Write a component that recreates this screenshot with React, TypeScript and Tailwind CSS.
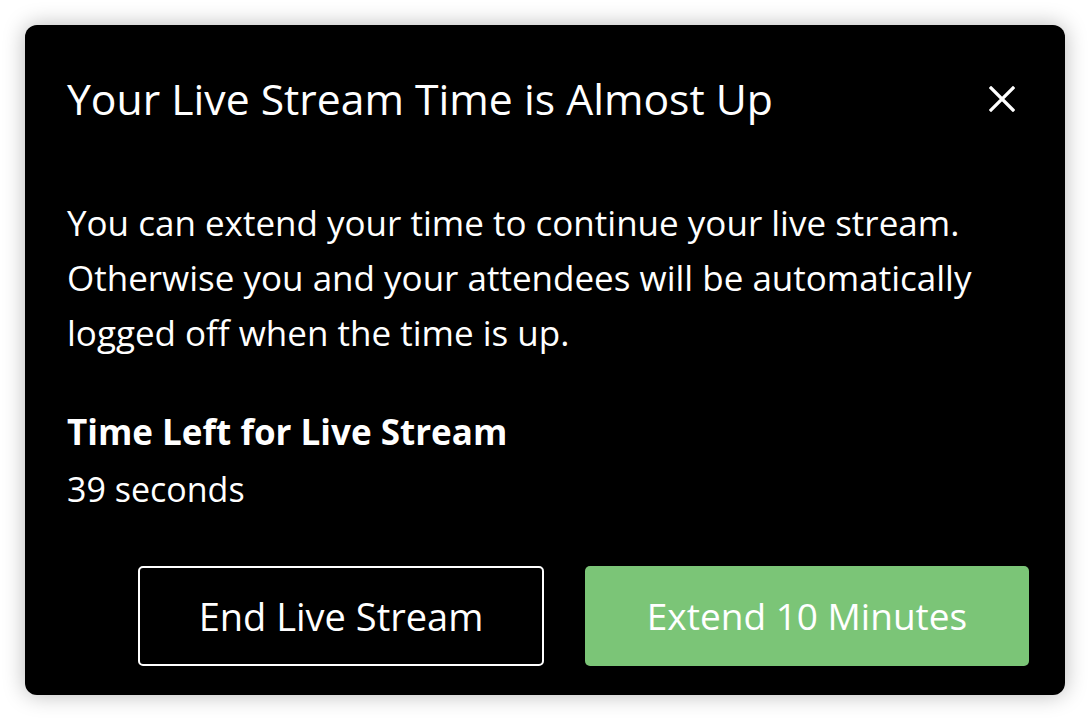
export default function App() {
  return (
    <div className="min-h-[720px] w-[1090px] bg-white pt-[25px] pl-[25px]" style={{ fontFamily: "'Open Sans', Lato, sans-serif" }}>
      <div className="flex h-[670px] w-[1040px] flex-col rounded-[12px] bg-black pl-[42px] pr-[36px] pt-[50px] text-white shadow-[0_0_22px_rgba(0,0,0,0.28)]">
        <div className="flex items-center justify-between">
          <h2 className="text-[42.7px] leading-[48px] font-medium">Your Live Stream Time is Almost Up</h2>
          <button className="mr-[13px] flex h-[48px] w-[28px] items-center justify-center">
            <svg width="26" height="26" viewBox="0 0 26 26" fill="none" stroke="white" strokeWidth="3.2" strokeLinecap="square">
              <path d="M2 2 L24 24 M24 2 L2 24" />
            </svg>
          </button>
        </div>
        <p className="mt-[72px] text-[35px] leading-[55px]">
          You can extend your time to continue your live stream.
          <br />
          Otherwise you and your attendees will be automatically
          <br />
          logged off when the time is up.
        </p>
        <h3 className="mt-[50px] text-[35px] leading-[44px] font-bold">Time Left for Live Stream</h3>
        <div className="mt-[16px] text-[34px] leading-[38px]">39 seconds</div>
        <div className="mt-[58px] flex justify-end gap-[41px]">
          <button className="flex h-[100px] w-[406px] items-center justify-center rounded-[5px] border-2 border-white text-[38px]">
            End Live Stream
          </button>
          <button className="flex h-[100px] w-[444px] items-center justify-center rounded-[5px] bg-[#7bc577] text-[37px]">
            Extend 10 Minutes
          </button>
        </div>
      </div>
    </div>
  );
}
